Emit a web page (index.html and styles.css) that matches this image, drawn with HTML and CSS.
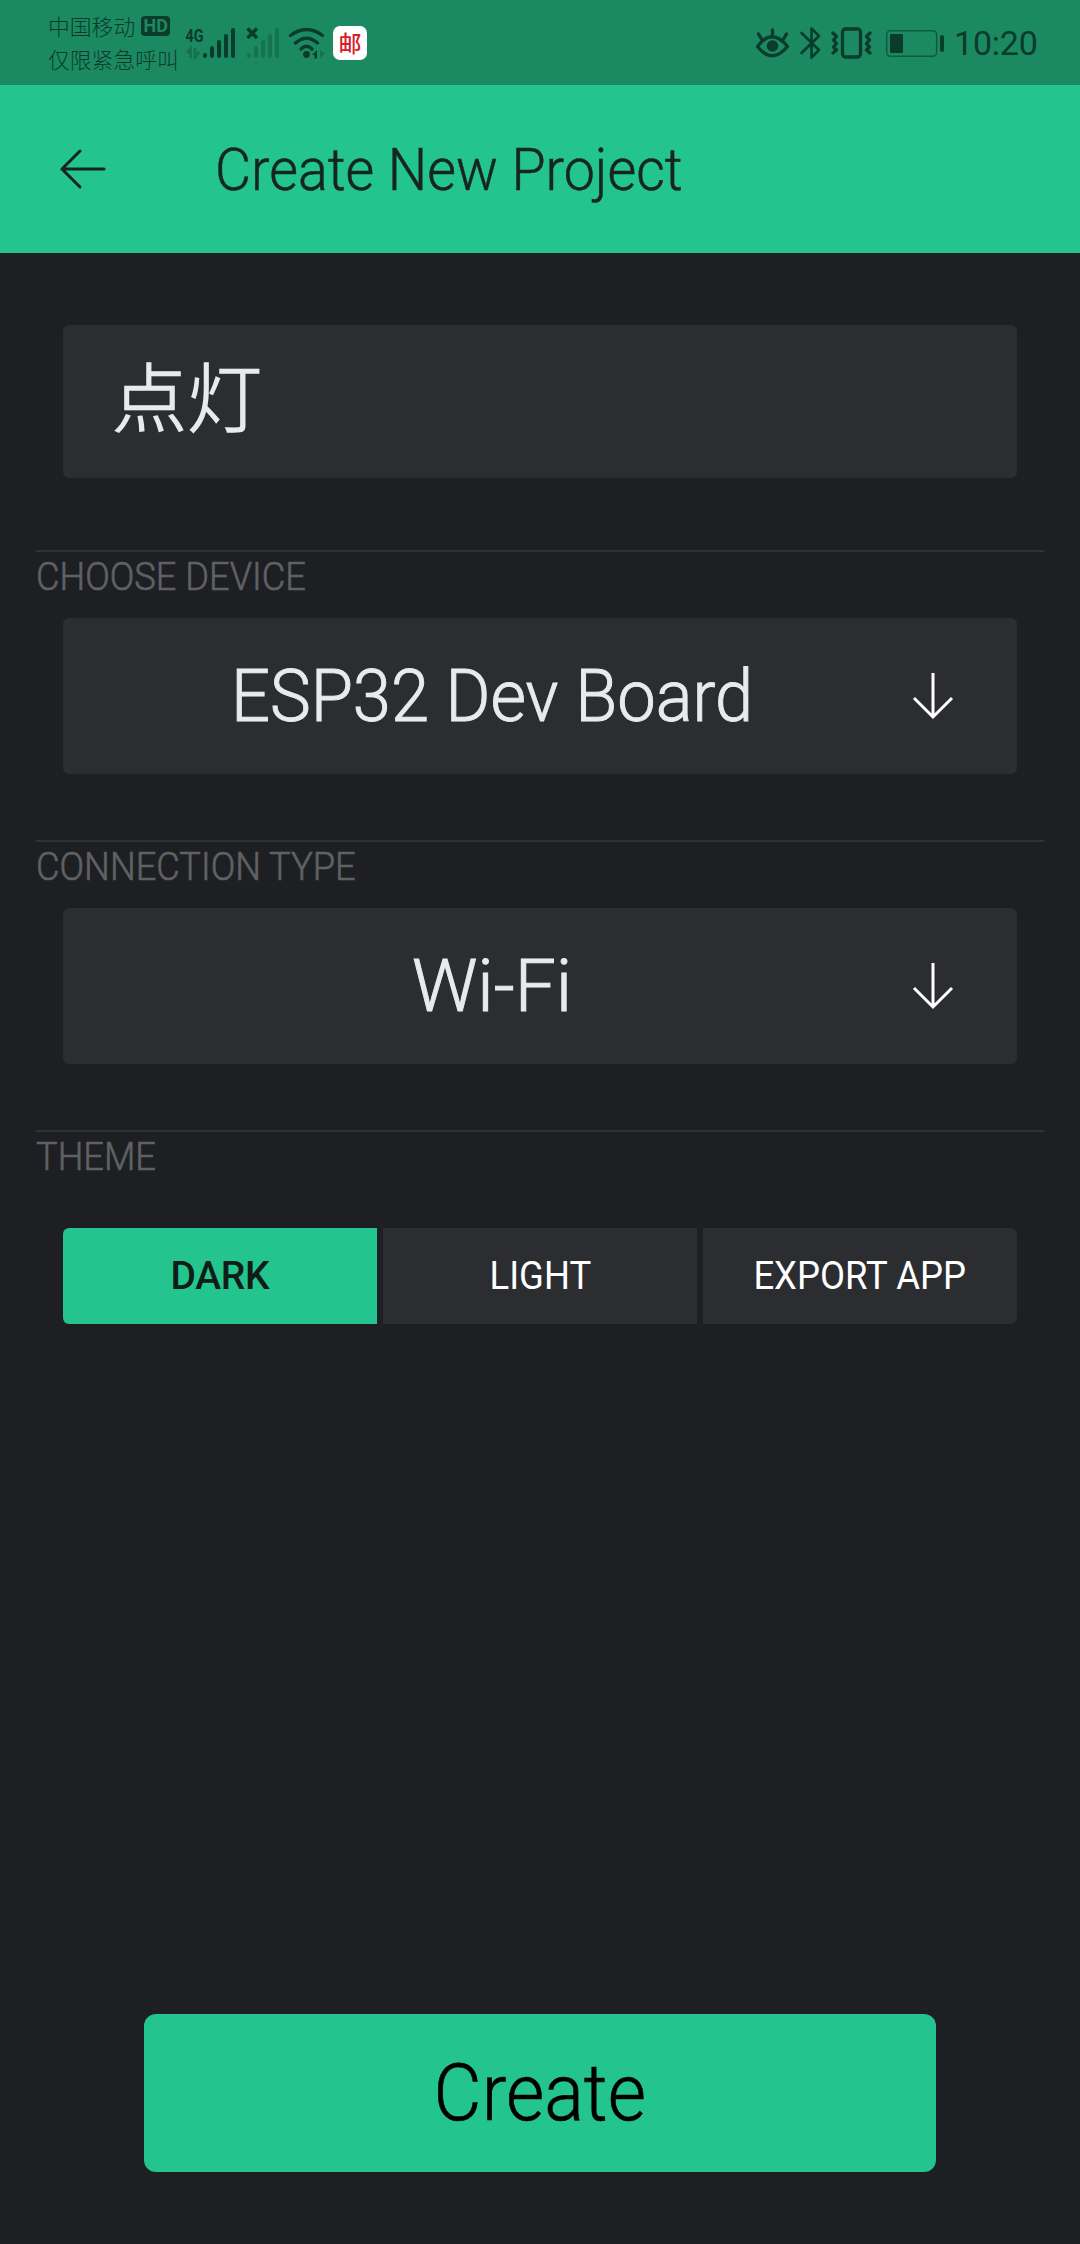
FILE: index.html
```
<!DOCTYPE html>
<html lang="en">
<head>
  <meta charset="UTF-8">
  <title>Create New Project</title>
  <link rel="stylesheet" href="styles.css">
</head>
<body>
  <div class="status-bar">
    <div class="carrier">
      <div class="carrier-row"><span class="carrier-name">中国移动</span><span class="hd">HD</span></div>
      <div class="carrier-row">仅限紧急呼叫</div>
    </div>
    <svg class="signal" width="52" height="34" viewBox="184 25 52 34">
      <text class="net" x="185.5" y="40.5" textLength="18" lengthAdjust="spacingAndGlyphs">4G</text>
      <path class="dim-line" d="M187 52l3.500-4v9M195 47v9l4.500-5"/>
      <path class="bars" d="M205 54v1M212 47v8M219 41v14M226 35v20M233 29v26"/>
    </svg>
    <svg class="no-signal" width="36" height="34" viewBox="245 25 36 34">
      <path class="cross" d="M247.500 27.500l9.500 9.500M257 27.500l-9.500 9.500"/>
      <path class="bars dim" d="M249 54v1M256 47v8M263 41v14M270 35v20M277 29v26"/>
    </svg>
    <svg class="wifi" width="39" height="34" viewBox="287 25 39 34">
      <path class="wave" d="M290.500 34.500Q306.500 22.500 322.500 34.500M295.500 42Q306.500 32.500 317.500 42M301 48Q306.500 42.500 312 48"/>
      <circle cx="306.500" cy="53.500" r="3.400"/>
      <path d="M312 54l5-5v8.500h-2.500v-3.500z"/>
      <path class="dim-fill" d="M320 49v8l5-4z"/>
    </svg>
    <div class="app-icon">邮</div>
    <div class="status-right">
      <svg class="eye" width="36" height="34" viewBox="755 25 36 34">
        <path class="line" d="M757.500 45.500Q772 26 787.500 45.500Q772 64 757.500 45.500zM772.500 29v6M758.500 33l3 5M786.500 33l-3 5"/>
        <circle cx="772.500" cy="45" r="5.800"/>
      </svg>
      <svg class="bluetooth" width="23" height="34" viewBox="799 25 23 34">
        <path class="line thin" d="M801.500 32l17.500 17-7.500 7.500v-29l7.500 7.500-17.500 17"/>
      </svg>
      <svg class="vibrate" width="42" height="34" viewBox="831 25 42 34">
        <rect class="line" x="842.500" y="28" width="18" height="28" rx="3"/>
        <path class="line" d="M833 32l3.500 3.500-3 3.500 3 3.500-3 3.500 3 3-3.500 3M870 32l-3.500 3.500 3 3.500-3 3.500 3 3.500-3 3 3.500 3"/>
      </svg>
      <svg class="battery" width="60" height="34" viewBox="885 25 60 34">
        <rect class="shell" x="886.700" y="29.700" width="50" height="25.600" rx="4"/>
        <rect x="890" y="33" width="13" height="19" rx="1"/>
        <rect x="940" y="34" width="4" height="17" rx="2"/>
      </svg>
      <span class="clock">10:20</span>
    </div>
  </div>

  <div class="header">
    <svg class="back" width="48" height="44" viewBox="0 0 48 44">
      <path d="M45 22H3M21 4L3 22l18 18"/>
    </svg>
    <h1 class="title">Create New Project</h1>
  </div>

  <div class="content">
    <div class="field">点灯</div>

    <div class="section">
      <div class="label">CHOOSE DEVICE</div>
      <div class="select">
        <span class="value device">ESP32 Dev Board</span>
        <svg class="arrow" width="42" height="48" viewBox="0 0 42 48">
          <path d="M21 1v44M2 26l19 19 19-19"/>
        </svg>
      </div>
    </div>

    <div class="section">
      <div class="label">CONNECTION TYPE</div>
      <div class="select">
        <span class="value">Wi-Fi</span>
        <svg class="arrow" width="42" height="48" viewBox="0 0 42 48">
          <path d="M21 1v44M2 26l19 19 19-19"/>
        </svg>
      </div>
    </div>

    <div class="section">
      <div class="label">THEME</div>
      <div class="themes">
        <div class="theme active">DARK</div>
        <div class="theme"><span class="theme-name">LIGHT</span></div>
        <div class="theme"><span class="theme-name">EXPORT APP</span></div>
      </div>
    </div>

    <div class="create"><span class="create-text">Create</span></div>
  </div>
</body>
</html>
```
FILE: styles.css
```
* {
  box-sizing: border-box;
}
body {
  margin: 0;
  height: 2244px;
  display: flex;
  flex-direction: column;
  background-color: #1e1f23;
  color: #e9eaea;
  font-family: Roboto, "Noto Sans CJK SC", sans-serif;
  font-weight: 300;
  white-space: nowrap;
  overflow: hidden;
}
svg {
  display: block;
  flex: none;
}
.status-bar {
  display: flex;
  align-items: center;
  height: 85px;
  padding-left: 48px;
  background-color: #1b8a63;
  color: #0b3b2a;
  fill: #0b3b2a;
}
.carrier {
  width: 136px;
  padding-bottom: 2px;
  font-family: "Noto Sans CJK SC", sans-serif;
  font-size: 21.800px;
}
.carrier-row {
  display: flex;
  align-items: center;
  height: 33px;
}
.hd {
  width: 29px;
  height: 20px;
  margin: 2px 0 0 6px;
  border-radius: 4px;
  background-color: #0b3b2a;
  color: #1b8a63;
  font: bold 18px/20px Roboto, sans-serif;
  text-align: center;
}
.net {
  font: bold 19px Roboto, sans-serif;
}
.bars {
  fill: none;
  stroke: #0b3b2a;
  stroke-width: 4;
  stroke-linecap: round;
}
.dim {
  stroke: #15734f;
}
.dim-line {
  fill: none;
  stroke: #15734f;
  stroke-width: 3;
}
.dim-fill {
  fill: #15734f;
}
.cross {
  stroke: #0b3b2a;
  stroke-width: 3.500;
}
.no-signal {
  margin-left: 9px;
}
.wifi {
  margin-left: 6px;
}
.wave, .line {
  fill: none;
  stroke: #0b3b2a;
  stroke-width: 3.300;
  stroke-linecap: round;
  stroke-linejoin: round;
}
.thin {
  stroke-width: 2.600;
}
.app-icon {
  width: 34px;
  height: 34px;
  margin-left: 7px;
  border-radius: 7px;
  background-color: #fff;
  color: #d7202c;
  font: 500 23px/32px "Noto Sans CJK SC", sans-serif;
  text-align: center;
}
.status-right {
  display: flex;
  align-items: center;
  margin-left: auto;
  width: 325px;
}
.bluetooth {
  margin-left: 8px;
}
.vibrate {
  margin-left: 9px;
}
.battery {
  margin-left: 12px;
}
.shell {
  fill: none;
  stroke: #0f5b40;
  stroke-width: 1.500;
}
.clock {
  margin-left: 9px;
  font-size: 34px;
  font-weight: 400;
  letter-spacing: -0.200px;
}
.header {
  display: flex;
  align-items: center;
  height: 168px;
  padding-left: 59px;
  background-color: #24c48e;
}
.back {
  fill: none;
  stroke: #17251f;
  stroke-width: 3;
  stroke-linecap: round;
}
.title {
  margin: 0 0 0 108px;
  color: #17251f;
  font-size: 59px;
  font-weight: 300;
  transform: scaleX(0.941);
  transform-origin: left;
  -webkit-text-stroke: 0.500px;
}
.content {
  flex: 1;
  display: flex;
  flex-direction: column;
  padding: 72px 36px;
}
.field {
  height: 153px;
  margin: 0 27px 72px;
  padding-left: 49px;
  border-radius: 6px;
  background-color: #2c2d31;
  font: 300 75px/138px "Noto Sans CJK SC", sans-serif;
  -webkit-text-stroke: 1.500px;
}
.section {
  height: 290px;
  border-top: 2px solid #303135;
}
.label {
  height: 66px;
  color: #606165;
  font-size: 39px;
  line-height: 50px;
  transform: scaleX(0.93);
  transform-origin: left;
  -webkit-text-stroke: 0.600px;
}
.select {
  display: flex;
  align-items: center;
  height: 156px;
  margin: 0 27px;
  border-radius: 6px;
  background-color: #2c2d31;
}
.value {
  width: 858px;
  font-size: 73px;
  line-height: 156px;
  text-align: center;
  -webkit-text-stroke: 1px;
}
.device {
  transform: scaleX(0.939);
}
.arrow {
  margin-left: -9px;
  fill: none;
  stroke: #fff;
  stroke-width: 3;
}
.themes {
  display: flex;
  gap: 6px;
  margin: 30px 27px 0;
  border-radius: 6px;
  overflow: hidden;
}
.theme {
  flex: 1;
  height: 96px;
  background-color: #2c2d31;
  color: #fff;
  font-size: 39px;
  font-weight: 400;
  line-height: 96px;
  text-align: center;
}
.theme-name {
  display: inline-block;
  transform: scaleX(0.935);
}
.active {
  background-color: #24c48e;
  color: #101c18;
  font-weight: 500;
  letter-spacing: -0.300px;
}
.create {
  height: 158px;
  margin: auto 108px 0;
  border-radius: 12px;
  background-color: #24c48e;
  color: #000;
  font-size: 80px;
  line-height: 158px;
  text-align: center;
  -webkit-text-stroke: 0.600px;
}
.create-text {
  display: inline-block;
  transform: scaleX(0.925);
}
```
